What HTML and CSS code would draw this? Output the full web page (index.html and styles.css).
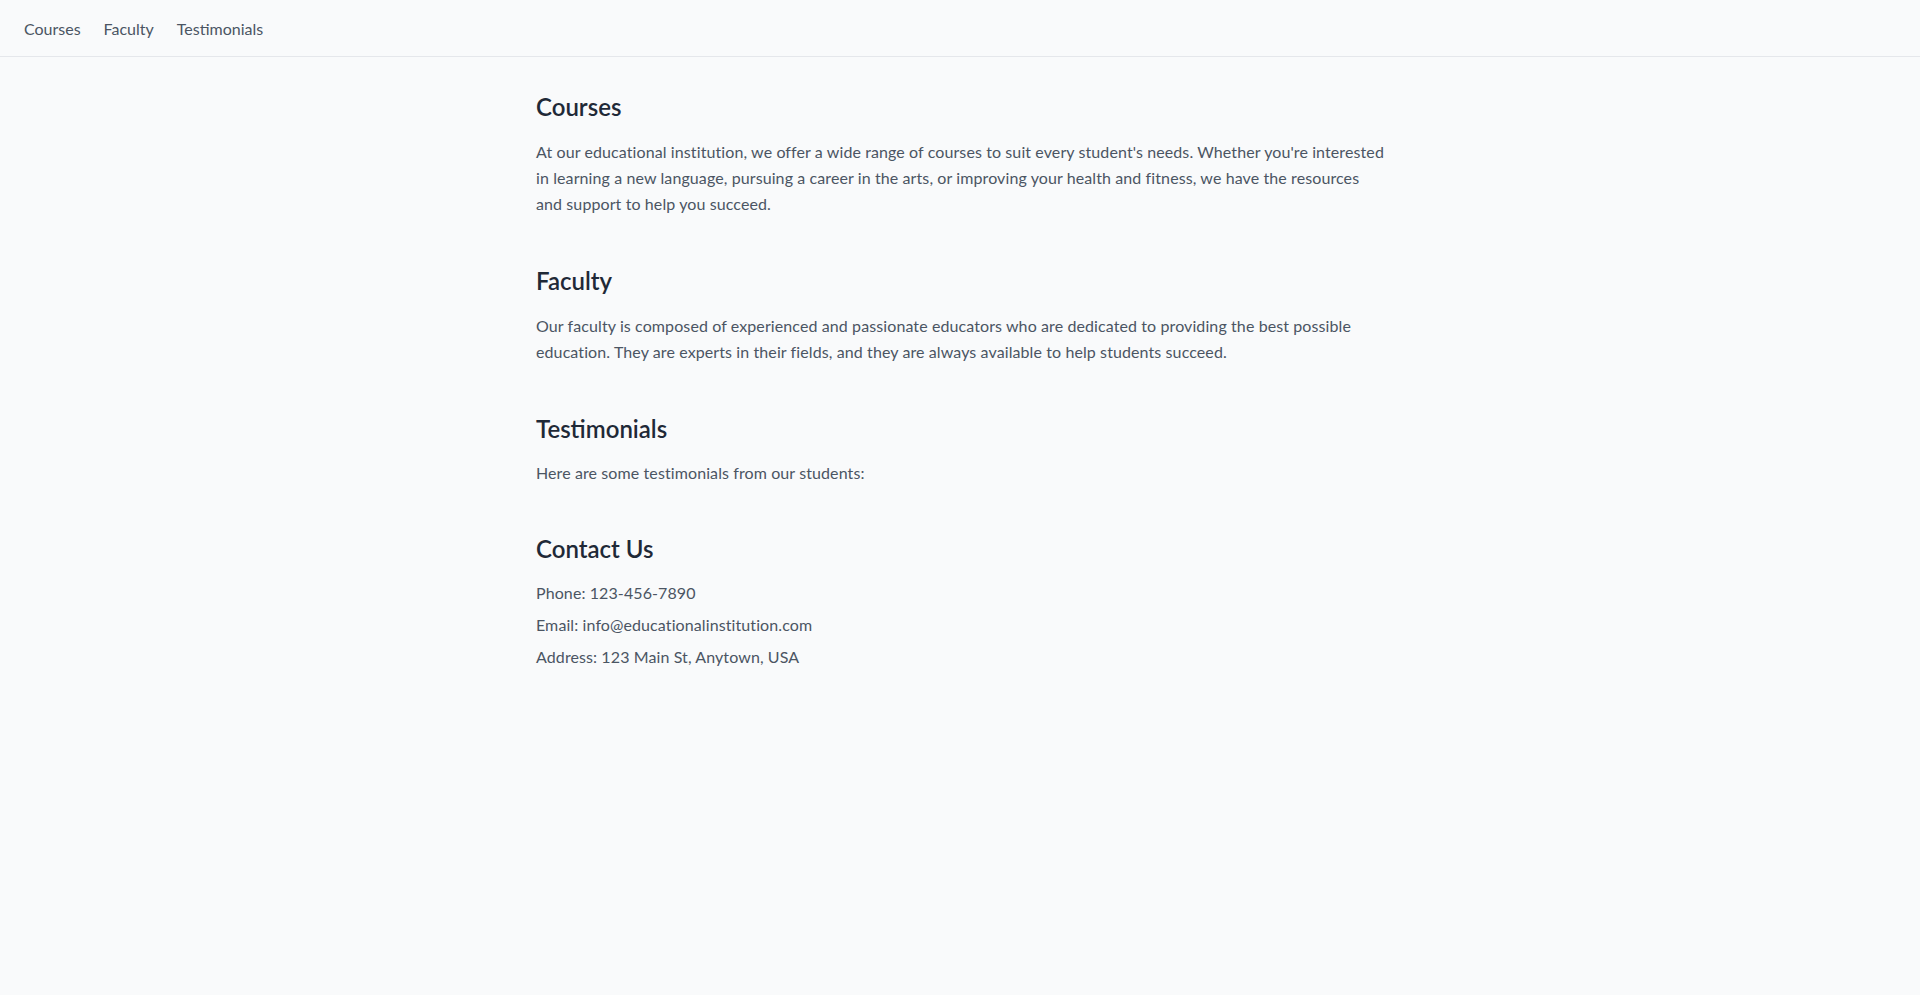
FILE: index.html
```html
<!DOCTYPE html>
<html lang="en">
<head>
<meta charset="utf-8">
<title>Educational Institution</title>
<link rel="stylesheet" href="styles.css">
</head>
<body>
<nav class="nav">
  <a class="nav-link" href="#courses">Courses</a>
  <a class="nav-link" href="#faculty">Faculty</a>
  <a class="nav-link" href="#testimonials">Testimonials</a>
</nav>
<main class="main">
  <section class="section" id="courses">
    <h2 class="title">Courses</h2>
    <p class="text">At our educational institution, we offer a wide range of courses to suit every student's needs. Whether you're interested in learning a new language, pursuing a career in the arts, or improving your health and fitness, we have the resources and support to help you succeed.</p>
  </section>
  <section class="section" id="faculty">
    <h2 class="title">Faculty</h2>
    <p class="text">Our faculty is composed of experienced and passionate educators who are dedicated to providing the best possible education. They are experts in their fields, and they are always available to help students succeed.</p>
  </section>
  <section class="section" id="testimonials">
    <h2 class="title">Testimonials</h2>
    <p class="text-plain">Here are some testimonials from our students:</p>
  </section>
  <section class="section" id="contact">
    <h2 class="title">Contact Us</h2>
    <div class="contact">
      <p class="text-plain">Phone: 123-456-7890</p>
      <p class="text-plain">Email: info@educationalinstitution.com</p>
      <p class="text-plain">Address: 123 Main St, Anytown, USA</p>
    </div>
  </section>
</main>
</body>
</html>
```
FILE: styles.css
```css
* { box-sizing: border-box; }
html, body { margin: 0; padding: 0; }
body {
  background: #f9fafb;
  font-family: Lato, "Open Sans", sans-serif;
  font-size: 16px;
  color: #4b5563;
  min-height: 995px;
}
.nav {
  height: 57px;
  display: flex;
  align-items: center;
  gap: 23px;
  padding: 2px 24px 0;
  border-bottom: 1px solid #e5e7eb;
}
.nav-link {
  color: #4b5563;
  text-decoration: none;
  font-size: 16px;
  line-height: 24px;
}
.main {
  max-width: 896px;
  margin: 0 auto;
  padding: 34px 24px 32px;
  display: flex;
  flex-direction: column;
  gap: 48px;
}
.section { display: flex; flex-direction: column; }
.title {
  margin: 0 0 16px;
  font-size: 24px;
  line-height: 32px;
  font-weight: 600;
  color: #1f2937;
}
.text {
  margin: 0;
  line-height: 26px;
  letter-spacing: 0.1px;
}
.text-plain {
  margin: 0;
  line-height: 24px;
  letter-spacing: 0.1px;
}
.contact { display: flex; flex-direction: column; gap: 8px; }
```
